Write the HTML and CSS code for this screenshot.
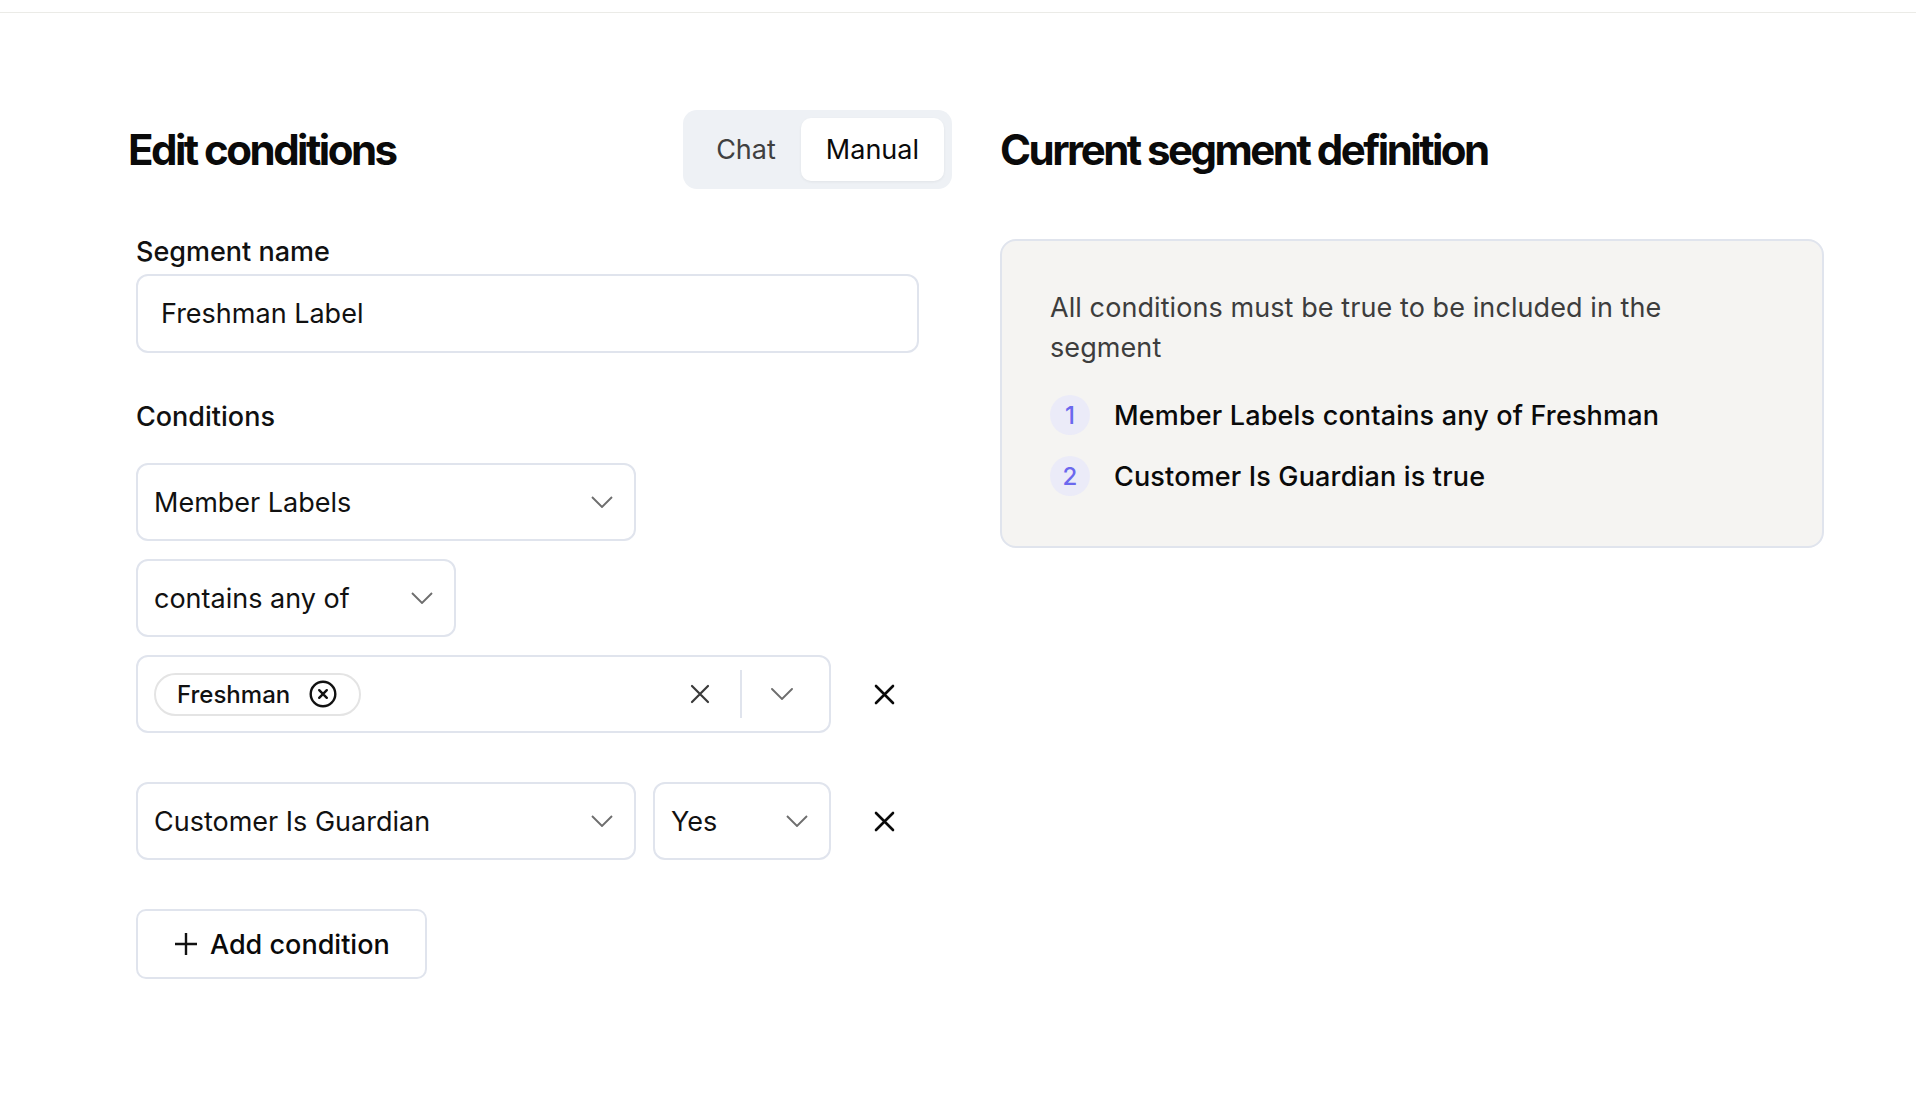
FILE: index.html
```html
<!DOCTYPE html>
<html lang="en">
<head>
  <meta charset="UTF-8" />
  <meta name="viewport" content="width=device-width, initial-scale=1.0"/>
  <title>Edit segment</title>
  <link rel="stylesheet" href="styles.css">
</head>
<body>
  <div class="topbar"></div>

  <main class="page">
    <section class="editor">
      <div class="editor-head">
        <h1>Edit conditions</h1>
        <div class="mode-toggle">
          <button type="button" class="mode-btn">Chat</button>
          <button type="button" class="mode-btn active">Manual</button>
        </div>
      </div>

      <form class="editor-form">
        <label class="field-label" for="segmentName">Segment name</label>
        <input class="text-input" id="segmentName" type="text" value="Freshman Label" />

        <div class="field-label conditions-label">Conditions</div>

        <div class="condition">
          <div class="select select-field">
            <span>Member Labels</span>
            <svg class="chevron" width="22" height="12" viewBox="0 0 22 12"><path d="M1 1l10 10 10-10"/></svg>
          </div>
          <div class="select select-op">
            <span>contains any of</span>
            <svg class="chevron" width="22" height="12" viewBox="0 0 22 12"><path d="M1 1l10 10 10-10"/></svg>
          </div>
          <div class="condition-row">
            <div class="multi-select">
              <div class="chips">
                <span class="chip">
                  Freshman
                  <svg width="28" height="28" viewBox="0 0 28 28" class="chip-x">
                    <circle cx="14" cy="14" r="12.3"/>
                    <path d="M10.2 10.2l7.6 7.6M17.8 10.2l-7.6 7.6"/>
                  </svg>
                </span>
              </div>
              <button type="button" class="icon-btn clear-btn">
                <svg width="20" height="20" viewBox="0 0 20 20"><path d="M2 2l16 16M18 2L2 18"/></svg>
              </button>
              <span class="divider"></span>
              <button type="button" class="icon-btn">
                <svg class="chevron" width="22" height="12" viewBox="0 0 22 12"><path d="M1 1l10 10 10-10"/></svg>
              </button>
            </div>
            <button type="button" class="icon-btn remove-btn">
              <svg width="21" height="21" viewBox="0 0 21 21"><path d="M2 2l17 17M19 2L2 19"/></svg>
            </button>
          </div>
        </div>

        <div class="condition">
          <div class="condition-row">
            <div class="select select-field">
              <span>Customer Is Guardian</span>
              <svg class="chevron" width="22" height="12" viewBox="0 0 22 12"><path d="M1 1l10 10 10-10"/></svg>
            </div>
            <div class="select select-bool">
              <span>Yes</span>
              <svg class="chevron" width="22" height="12" viewBox="0 0 22 12"><path d="M1 1l10 10 10-10"/></svg>
            </div>
            <button type="button" class="icon-btn remove-btn">
              <svg width="21" height="21" viewBox="0 0 21 21"><path d="M2 2l17 17M19 2L2 19"/></svg>
            </button>
          </div>
        </div>

        <button type="button" class="add-btn">
          <svg width="24" height="24" viewBox="0 0 24 24"><path d="M12 1v22M1 12h22"/></svg>
          Add condition
        </button>
      </form>
    </section>

    <section class="definition">
      <h2>Current segment definition</h2>
      <div class="definition-card">
        <p>All conditions must be true to be included in the segment</p>
        <ol class="rule-list">
          <li><span class="rule-num">1</span>Member Labels contains any of Freshman</li>
          <li><span class="rule-num">2</span>Customer Is Guardian is true</li>
        </ol>
      </div>
    </section>
  </main>
</body>
</html>
```

FILE: styles.css
```css
* {
  box-sizing: border-box;
  margin: 0;
  padding: 0;
}

body {
  font-family: Inter, "Noto Sans", sans-serif;
  font-size: 27px;
  color: #111;
  background: #fff;
}

button {
  font-family: inherit;
  font-size: inherit;
  background: none;
  border: none;
  color: inherit;
  cursor: pointer;
}

.topbar {
  height: 13px;
  border-bottom: 1px solid #ebebe7;
}

.page {
  display: flex;
  gap: 48px;
  padding: 97px 0 0 128px;
}

.editor,
.definition {
  width: 824px;
}

/* header row */
.editor-head {
  display: flex;
  justify-content: space-between;
  align-items: center;
  height: 79px;
}

h1,
h2 {
  font-size: 42px;
  font-weight: 700;
  letter-spacing: -0.06em;
  line-height: 79px;
  color: #0a0a0a;
}

.mode-toggle {
  display: flex;
  padding: 8px;
  background: #eef1f5;
  border-radius: 14px;
}

.mode-btn {
  height: 63px;
  padding: 0 25px;
  border-radius: 10px;
  color: #404040;
}

.mode-btn.active {
  background: #fff;
  color: #0a0a0a;
  box-shadow: 0 1px 3px rgba(0, 0, 0, 0.06);
}

/* form */
.editor-form {
  display: flex;
  flex-direction: column;
  align-items: flex-start;
  padding: 45px 33px 0 8px;
}

.field-label {
  font-weight: 500;
  line-height: 36px;
  margin-bottom: 4px;
}

.conditions-label {
  margin-top: 46px;
  margin-bottom: 28px;
}

.text-input {
  width: 100%;
  height: 79px;
  padding: 0 23px;
  border: 2px solid #e0e4ed;
  border-radius: 12px;
  font-family: inherit;
  font-size: 27px;
  color: #111;
  outline: none;
}

.condition {
  display: flex;
  flex-direction: column;
  align-items: flex-start;
  gap: 18px;
  margin-bottom: 49px;
}

.condition-row {
  display: flex;
  align-items: center;
  gap: 17px;
}

.select {
  display: flex;
  justify-content: space-between;
  align-items: center;
  height: 78px;
  padding: 0 20px 0 16px;
  border: 2px solid #e0e4ed;
  border-radius: 12px;
  background: #fff;
}

.select-field { width: 500px; }
.select-op { width: 320px; }
.select-bool { width: 178px; }

.chevron {
  flex: none;
  fill: none;
  stroke: #6e6e6e;
  stroke-width: 1.9;
  margin-right: 1px;
}

.multi-select {
  display: flex;
  align-items: center;
  width: 695px;
  height: 78px;
  padding: 0 27px 0 16px;
  border: 2px solid #e0e4ed;
  border-radius: 12px;
}

.chips {
  flex: 1;
  display: flex;
}

.chip {
  display: flex;
  align-items: center;
  gap: 19px;
  height: 43px;
  padding: 0 22px 0 21px;
  border: 2px solid #e4e4e4;
  border-radius: 22px;
  font-size: 24px;
  font-weight: 500;
}

.chip-x {
  fill: none;
  stroke: #111;
  stroke-width: 2.4;
  stroke-linecap: round;
}

.icon-btn {
  display: flex;
  justify-content: center;
  align-items: center;
  width: 40px;
  height: 40px;
}

.icon-btn svg path {
  fill: none;
  stroke-linecap: round;
}

.clear-btn svg path {
  stroke: #3a3a3a;
  stroke-width: 2.2;
}

.divider {
  width: 2px;
  height: 48px;
  margin: 0 20px;
  background: #e0e4ed;
}

.remove-btn svg path {
  stroke: #0a0a0a;
  stroke-width: 2.6;
}

.condition-row > .remove-btn {
  margin-left: 16px;
}

.add-btn {
  display: flex;
  align-items: center;
  gap: 12px;
  height: 70px;
  padding: 0 35px 0 36px;
  border: 2px solid #e0e4ed;
  border-radius: 10px;
  font-weight: 500;
  color: #0a0a0a;
}

.add-btn svg path {
  fill: none;
  stroke: #111;
  stroke-width: 2.4;
}

/* right side */
.definition-card {
  margin-top: 50px;
  padding: 47px 48px 50px;
  background: #f5f4f2;
  border: 2px solid #e0e4ed;
  border-radius: 16px;
}

.definition-card p {
  line-height: 40px;
  color: #3d3d3d;
  max-width: 690px;
  letter-spacing: 0.003em;
}

.rule-list {
  list-style: none;
  margin-top: 27px;
  display: flex;
  flex-direction: column;
  gap: 21px;
}

.rule-list li {
  display: flex;
  align-items: center;
  gap: 24px;
  font-weight: 500;
  letter-spacing: 0.006em;
  color: #0a0a0a;
}

.rule-num {
  display: flex;
  justify-content: center;
  align-items: center;
  width: 40px;
  height: 40px;
  border-radius: 50%;
  background: #ebebf8;
  color: #6b68ee;
  font-size: 24px;
  font-weight: 500;
}
```
